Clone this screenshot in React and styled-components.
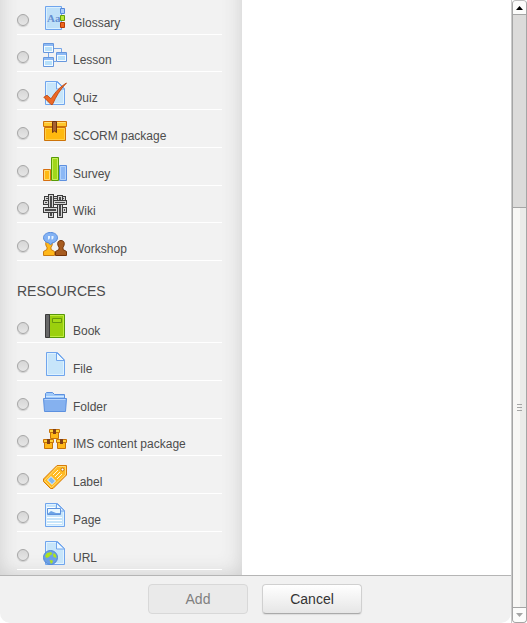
import React from "react";
import styled, { createGlobalStyle, css } from "styled-components";

const GlobalStyle = createGlobalStyle`
  * { box-sizing: border-box; }
  body { margin: 0; background: #fff; font-family: "Liberation Sans", Arial, sans-serif; color: #4d4d4d; }
`;

const Window = styled.div`
  display: flex;
  height: 100vh;
  overflow: hidden;
`;

const Dialog = styled.form`
  flex: 1;
  min-width: 0;
  display: flex;
  flex-direction: column;
  border-right: 1px solid #cbcbcb;
`;

const DialogBody = styled.div`
  flex: 1;
  min-height: 0;
  overflow: hidden;
  display: flex;
  align-items: flex-end;
`;

const Options = styled.div`
  width: 242px;
  flex: none;
  padding: 48px 20px 5px 17px;
  background: #f2f2f2;
  box-shadow: inset 0 0 20px 0 #ccc;
`;

const Heading = styled.h3`
  margin: 0;
  padding: 20px 0 4px;
  font-size: 14px;
  line-height: 20px;
  font-weight: 400;
  text-transform: uppercase;
`;

const List = styled.div`
  display: grid;
  grid-auto-rows: 1fr;
  height: ${(p) => (p.$tall ? "265px" : "264px")};
`;

const Option = styled.label`
  display: flex;
  align-items: flex-end;
  padding-bottom: 4px;
  border-bottom: 1px solid #fff;
  font-size: 12px;
  line-height: 14px;
`;

const Radio = styled.input`
  appearance: none;
  flex: none;
  width: 12px;
  height: 12px;
  margin: 0 14px 4px 0;
  border: 1px solid #a6a6a6;
  border-radius: 50%;
  background: linear-gradient(#d6d6d6, #e6e6e6);
  box-shadow: 0 1px 1px #ccc;
`;

const Icon = styled.svg`
  display: block;
  flex: none;
  width: 24px;
  height: 24px;
  margin-right: 6px;
`;

const Footer = styled.div`
  display: flex;
  justify-content: center;
  gap: 14px;
  padding: 8px 1px 9px 0;
  border-top: 1px solid #b5b5b5;
  border-radius: 0 0 10px 10px;
  background: #f1f1f1;
`;

const Button = styled.button`
  width: 100px;
  height: 30px;
  padding: 0;
  border: 1px solid #d0d0d0;
  border-bottom-color: #aaa;
  border-radius: 4px;
  background: linear-gradient(#fff, #e6e6e6);
  box-shadow: 0 1px 1px #ddd;
  color: #333;
  font: 14px/20px "Liberation Sans", Arial, sans-serif;
  &:disabled {
    border-color: #d8d8d8;
    background: #eaeaea;
    box-shadow: none;
    color: #808080;
  }
`;

const Scrollbar = styled.div`
  flex: none;
  width: 15px;
  display: flex;
  flex-direction: column;
  border: 1px solid #a5a5a5;
  border-radius: 4px;
  border-top-color: #bdbdbd;
  background: #dcdbda;
`;

const ArrowButton = styled.button`
  display: flex;
  align-items: center;
  justify-content: center;
  height: 14px;
  padding: 0;
  border: 0 solid #a5a5a5;
  background: #fcfcfb;
  ${(p) =>
    p.$end
      ? css`border-radius: 0 0 3px 3px;`
      : css`border-bottom-width: 1px; border-radius: 3px 3px 0 0;`}
`;

const Trough = styled.div`
  flex: 193;
`;

const Thumb = styled.div`
  flex: 400;
  display: flex;
  flex-direction: column;
  align-items: center;
  justify-content: center;
  gap: 2px;
  border: solid #a5a5a5;
  border-width: 1px 0;
  background: linear-gradient(90deg, #f8f7f5 7px, #ebebe9 7px);
`;

const Grip = styled.span`
  width: 5px;
  height: 1px;
  background: #a5a5a5;
`;

const Sheet = () => (
  <>
    <path d="M2.5.5h12l7 7v16h-19z" fill="#c7e5fa" stroke="#70a5ed" />
    <path d="M3.5 1.5h10.5M3.5 1.5v21h17V8.5" fill="none" stroke="#e0f3ff" />
    <path d="M13.5.5v7.5h8z" fill="#edf8ff" stroke="#70a5ed" strokeLinejoin="round" />
  </>
);

const Person = ({ x, fill, edge }) => (
  <g transform={`translate(${x} 0)`}>
    <path d="M.5 23.5v-4L4 17.5v-2C1.8 12 2.4 8.5 6 8.5s4.2 3.5 2 7v2l3.5 2v4z" fill={fill} stroke={edge} />
  </g>
);

const SmallBox = ({ x, y }) => (
  <g transform={`translate(${x} ${y})`}>
    <path d="M1.5 3.5h8v6h-8z" fill="#ffb818" stroke="#c67208" />
    <path d="M.5.5h10v3H.5z" fill="#ffd137" stroke="#c67208" />
    <path d="M4 0h3v5H4z" fill="#824016" />
  </g>
);

const Frame = ({ x, y }) => (
  <g transform={`translate(${x} ${y})`}>
    <path d="M.5.5h10v9H.5z" fill="#f4fbff" stroke="#6797dd" />
    <path d="M1 1h9v2H1z" fill="#8cb9f4" />
    <path d="M2 4h7v4H2z" fill="#b7e0fa" />
  </g>
);

const Strand = ({ x, y, w, h }) => (
  <>
    <rect x={x + 0.5} y={y + 0.5} width={w - 1} height={h - 1} fill="#d6d6d6" stroke="#3c3c3c" />
    <rect x={x + 2} y={y + 2} width={w - 4} height={h - 4} fill="#4a4a4a" />
  </>
);

const drawings = {
  glossary: (
    <>
      <path d="M2.5.5h16v23h-16z" fill="#bfe0f8" stroke="#70a5ed" />
      <path d="M3.5 1.5h14v21h-14z" fill="none" stroke="#daf0ff" />
      <path d="M17.5 2.5h4v5h-4z" fill="#a9ccfa" stroke="#5688da" />
      <path d="M17.5 9.5h4v5h-4z" fill="#b7e834" stroke="#639e08" />
      <path d="M17.5 16.5h4v5h-4z" fill="#ed661d" stroke="#b83b06" />
      <text x="4" y="16" fontFamily="Liberation Serif, serif" fontWeight="700" fontSize="11" fill="#648fd1">Aa</text>
    </>
  ),
  lesson: (
    <>
      <path d="M5.5 10v4M11 5.5h7.5V9M11 18.5h2" fill="none" stroke="#76a5e8" />
      <Frame x={0} y={0} />
      <Frame x={0} y={14} />
      <Frame x={13} y={9} />
    </>
  ),
  quiz: (
    <>
      <Sheet />
      <path d="M.8 16.2 4 14.2l4 3.6C12.5 10.5 17 6 23.5 2 17 8.5 13 15.5 9.5 23.5H8z" fill="#ed6825" stroke="#b94209" strokeWidth=".8" />
    </>
  ),
  scorm: (
    <>
      <path d="M1.5 8.5h21v13h-21z" fill="#ffb90e" stroke="#cd7309" />
      <path d="M2.5 9.5h19v11h-19z" fill="none" stroke="#ffcf45" />
      <path d="M.5 2.5h23v5H.5z" fill="#ffc72b" stroke="#cd7309" />
      <path d="M1.5 3.5h21" stroke="#ffdf78" />
      <path d="M9.5 2.5h4v11l-2-1.5-2 1.5z" fill="#a76231" stroke="#713610" />
    </>
  ),
  survey: (
    <>
      <path d="M.5 12.5h7v11h-7z" fill="#ffb912" stroke="#d66f10" />
      <path d="M1.5 13.5h5v9h-5z" fill="none" stroke="#ffdc73" />
      <path d="M16.5 8.5h7v15h-7z" fill="#8cb8f5" stroke="#5e90df" />
      <path d="M17.5 9.5h5v13h-5z" fill="none" stroke="#b2d2fb" />
      <path d="M8.5.5h7v23h-7z" fill="#a1d719" stroke="#579b04" />
      <path d="M9.5 1.5h5v21h-5z" fill="none" stroke="#c7ee5c" />
    </>
  ),
  wiki: (
    <>
      <Strand x={1} y={2} w={22} h={5} />
      <Strand x={5} y={0} w={6} h={24} />
      <Strand x={14} y={1} w={6} h={23} />
      <Strand x={10} y={6} w={14} h={5} />
      <Strand x={0} y={6} w={6} h={5} />
      <Strand x={0} y={13} w={15} h={6} />
      <Strand x={19} y={13} w={5} h={6} />
    </>
  ),
  workshop: (
    <>
      <Person x={0} fill="#ffb81a" edge="#c97a10" />
      <Person x={12} fill="#a75c20" edge="#743408" />
      <path d="M7.5.5c4.2 0 7 2.3 7 5.2s-2.8 5-5.5 5.3L7.5 13 6 11C2.8 10.5.5 8.5.5 5.7S3.3.5 7.5.5z" fill="#83b2f4" stroke="#568bdc" />
      <path d="M5 4h2v2L6 7.500H5zM8.500 4h2v2l-1 1.500h-1z" fill="#e8f4ff" />
    </>
  ),
  book: (
    <>
      <path d="M5.5.5h16v23h-16z" fill="#9bd00d" stroke="#57980a" />
      <path d="M6.5 1.5h14v21h-14z" fill="none" stroke="#c0ec3f" />
      <path d="M2.5.5h4v23h-4z" fill="#686868" stroke="#3b3b3b" />
      <path d="M9.5 4.5h9v4h-9z" fill="#a6db17" stroke="#66970b" />
    </>
  ),
  file: (
    <g transform="translate(1 0)">
      <path d="M2.5.5h11l7 7.5v15.5h-18z" fill="#c7e5fa" stroke="#70a5ed" />
      <path d="M3.5 22V1.5H12M3.5 22.5h16V9.5" fill="none" stroke="#def2ff" />
      <path d="M12.5.5V8.5h8z" fill="#edf8ff" stroke="#70a5ed" />
    </g>
  ),
  folder: (
    <>
      <path d="M2.5 19V3.5l1-1h6l2 2h10v14z" fill="#9ec9fa" stroke="#5c90df" />
      <path d="M3 6.5h18" stroke="#d1e8ff" />
      <path d="M.5 8.5h23l-1 13h-21z" fill="#85b1ef" stroke="#5c90df" />
      <path d="M1.5 9.5h21" stroke="#b7d6fc" />
    </>
  ),
  ims: (
    <>
      <SmallBox x={6} y={2} />
      <SmallBox x={0} y={12} />
      <SmallBox x={13} y={12} />
    </>
  ),
  label: (
    <>
      <path d="M14 .5h9.5v9.5L10 23.5H7.5L.5 16.5V14z" fill="#ffba22" stroke="#d77b0a" strokeLinejoin="round" />
      <path d="M14.5 1.5h8v8L8.5 22.5l-7-7z" fill="none" stroke="#ffda75" />
      <path d="m4 15 4-4 5 5-4 4z" fill="#e8f5fc" />
      <path d="m5 15 3-3 4 4-3 3z" fill="#84b8ed" />
      <path d="m10 10 5-5M12 12l5-5M14 14l5-5" stroke="#fff7d9" />
      <circle cx="19.5" cy="4.5" r="1.5" fill="#fff" stroke="#c5740b" />
    </>
  ),
  page: (
    <>
      <Sheet />
      <path d="M4 4.5h8M4 14.5h15M4 17.5h15M4 20.5h15" stroke="#fff" />
      <path d="M4.5 5.5h13v6h-13z" fill="#eaf8ff" stroke="#5e93dd" />
      <path d="M5 10.5 8 8l5 2h4v1H5z" fill="#6da4e6" />
    </>
  ),
  url: (
    <>
      <Sheet />
      <circle cx="7.5" cy="16.5" r="7" fill="#6c9fe6" stroke="#5188d4" />
      <path d="m2 15 2-3 4-1 1.5 2L7 14.5 6 16l-2.5 1zM11 12l2 2 .5 3-3-1-.5-2zM6.5 19l3.5.5-.5 2L8 23z" fill="#aee31b" />
    </>
  ),
};

const activities = [
  ["glossary", "Glossary"],
  ["lesson", "Lesson"],
  ["quiz", "Quiz"],
  ["scorm", "SCORM package"],
  ["survey", "Survey"],
  ["wiki", "Wiki"],
  ["workshop", "Workshop"],
];

const resources = [
  ["book", "Book"],
  ["file", "File"],
  ["folder", "Folder"],
  ["ims", "IMS content package"],
  ["label", "Label"],
  ["page", "Page"],
  ["url", "URL"],
];

const OptionList = ({ items, tall }) => (
  <List $tall={tall}>
    {items.map(([id, name]) => (
      <Option key={id}>
        <Radio type="radio" name="module" value={id} />
        <Icon viewBox="0 0 24 24" aria-hidden="true">{drawings[id]}</Icon>
        {name}
      </Option>
    ))}
  </List>
);

export default function App() {
  return (
    <>
      <GlobalStyle />
      <Window>
        <Dialog onSubmit={(e) => e.preventDefault()}>
          <DialogBody>
            <Options>
              <OptionList items={activities} />
              <Heading>Resources</Heading>
              <OptionList items={resources} tall />
            </Options>
          </DialogBody>
          <Footer>
            <Button type="submit" disabled>Add</Button>
            <Button type="button">Cancel</Button>
          </Footer>
        </Dialog>
        <Scrollbar>
          <ArrowButton type="button" aria-label="Scroll up">
            <svg width="7" height="4" aria-hidden="true"><path d="M0 4 3.5 0 7 4z" fill="#000" /></svg>
          </ArrowButton>
          <Trough />
          <Thumb>
            <Grip />
            <Grip />
            <Grip />
          </Thumb>
          <ArrowButton type="button" aria-label="Scroll down" $end>
            <svg width="7" height="4" aria-hidden="true"><path d="M0 0h7L3.5 4z" fill="#a5a5a5" /></svg>
          </ArrowButton>
        </Scrollbar>
      </Window>
    </>
  );
}
